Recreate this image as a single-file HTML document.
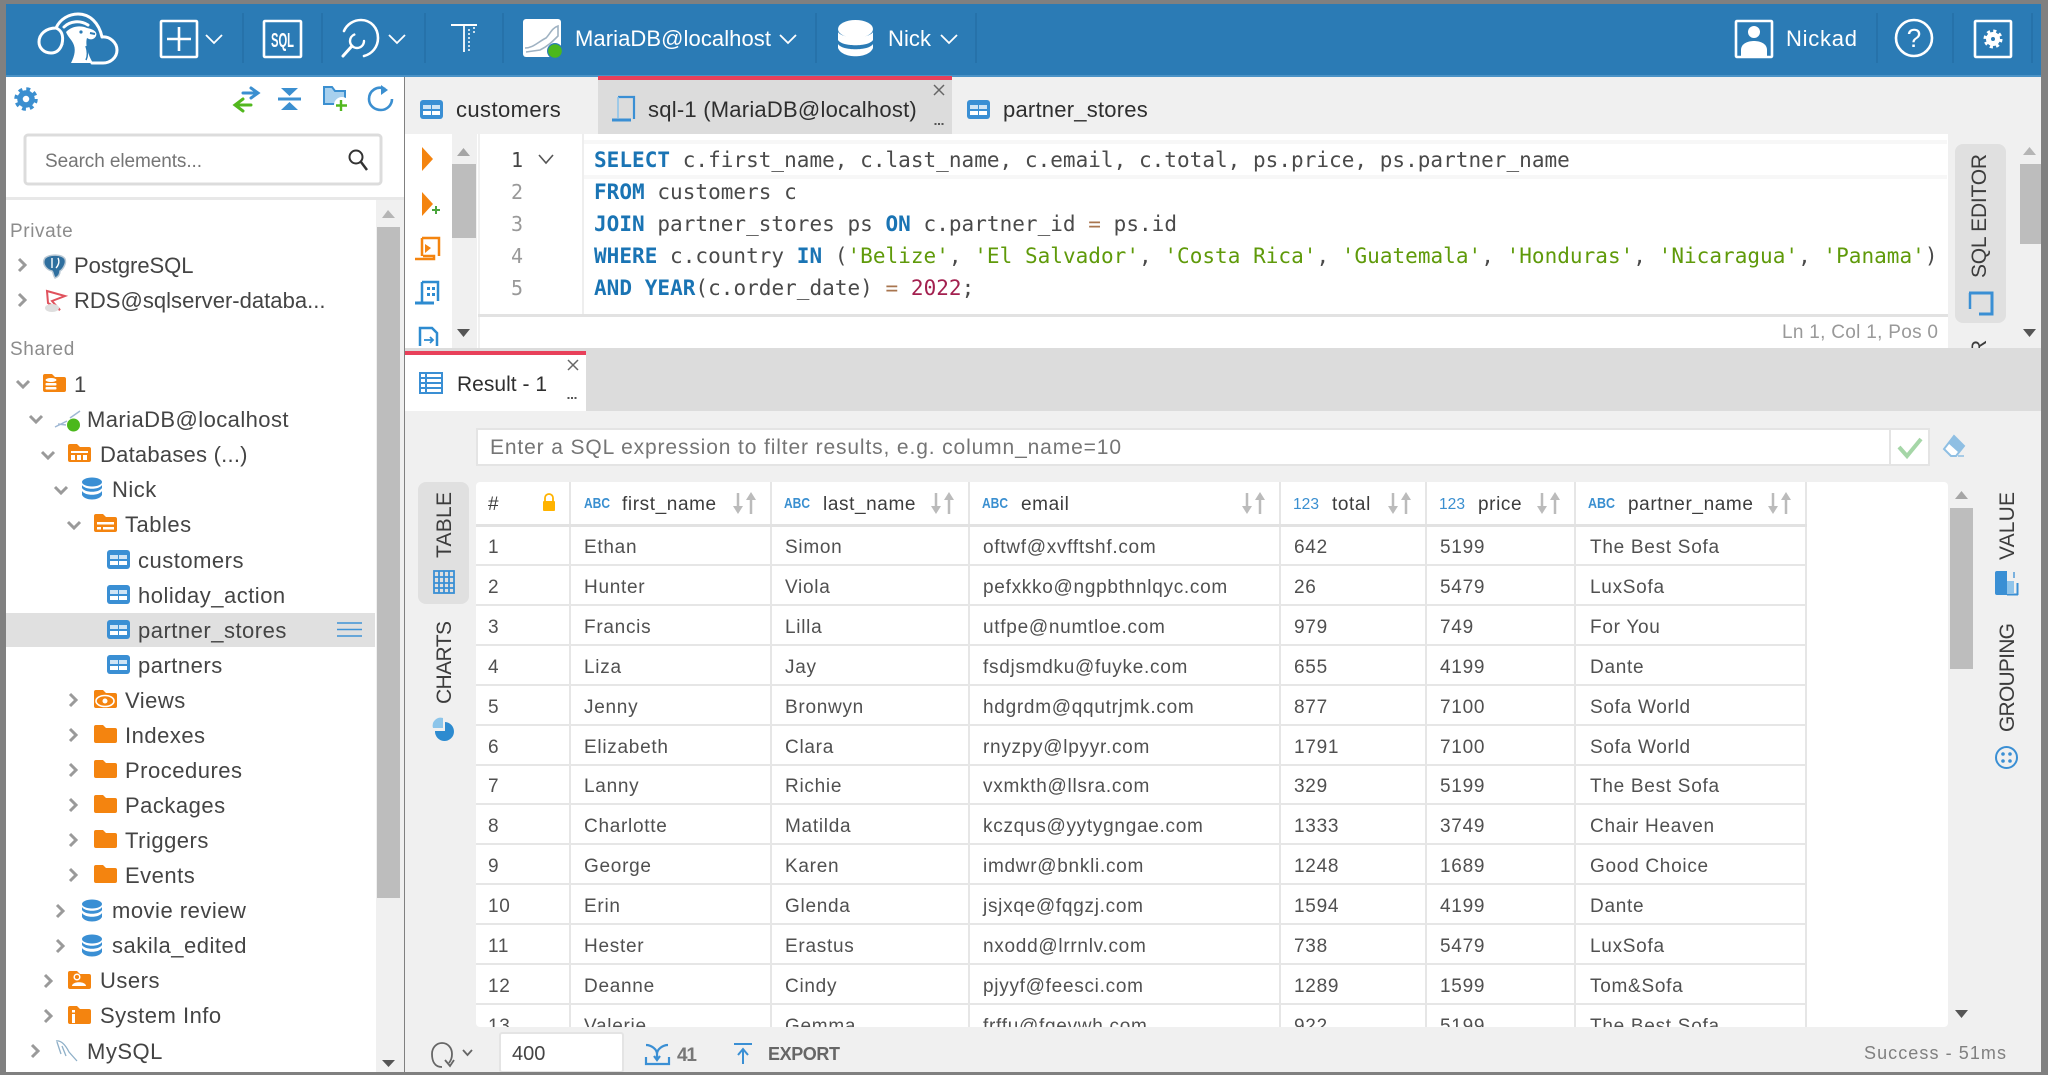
<!DOCTYPE html>
<html lang="en"><head><meta charset="utf-8"><title>MariaDB@localhost</title>
<style>
html,body{margin:0;padding:0;background:#808080;width:2048px;height:1075px;overflow:hidden}
svg{display:block;font-family:"Liberation Sans",sans-serif;filter:blur(.35px)}
.side{font-size:22px;fill:#444;letter-spacing:.5px}
.lab{font-size:19px;fill:#8c8c8c;letter-spacing:.6px}
.tab{font-size:22px;fill:#2e2e2e;letter-spacing:.25px}
.code{font-family:"DejaVu Sans Mono",monospace;font-size:21px;fill:#4a4a4a;letter-spacing:.03px}
.kw{fill:#1a74b4;font-weight:bold}.str{fill:#5f9a0a}.num{fill:#a3204f}.op{fill:#a8754f}
.ln{font-family:"DejaVu Sans Mono",monospace;font-size:20px;fill:#999;text-anchor:middle}
.cell{font-size:19px;fill:#505050;letter-spacing:.72px}
.th{font-size:19px;fill:#3c3c3c;letter-spacing:.6px}
.abc{font-size:15px;font-weight:bold;fill:#3a8fd0}
.n123{font-size:16px;fill:#3a8fd0}
.vt{font-size:21px;fill:#3c3c3c}
.hd{font-size:22px;fill:#fff}
</style></head><body>
<svg width="2048" height="1075" viewBox="0 0 2048 1075" xmlns="http://www.w3.org/2000/svg">
<rect width="2048" height="1075" fill="#808080"/>
<!-- header -->
<rect x="6" y="4" width="2035" height="73" fill="#2b7bb5"/>
<rect x="6" y="75" width="2035" height="2" fill="#4a92c6"/>
<g stroke="#2570a6" stroke-width="1.5"><path d="M243 13V63M322 13V63M425 13V63M503 13V63M816 13V63M976 13V63M1877 13V63M1953 13V63M2032 13V63"/></g>
<!-- logo -->
<g fill="none" stroke="#fff" stroke-width="3" stroke-linecap="round" stroke-linejoin="round">
<path d="M62 44C60 50 56 53 51 53C44 53 39 48 39 42C39 34 46 28 56 28C60 19 69 14 78 14C90 14 99 23 102 37C110 36 117 43 117 50C117 58 110 63 103 63H92"/>
<path d="M56 28C61 30 64 35 62 44"/>
<path d="M64 27C70 21 80 20 88 25"/>
</g>
<path d="M66 32C72 26 80 25 87 28C93 29 98 32 96 36C94 40 90 40 87 38C85 44 88 55 93 63H71C75 55 76 49 73 43C71 39 68 37 66 32Z" fill="#fff"/>
<circle cx="81" cy="32" r="1.6" fill="#2b7bb5"/><path d="M90 33l5 1" stroke="#2b7bb5" stroke-width="2"/><path d="M86 46C88 52 88 56 86 60" fill="none" stroke="#2b7bb5" stroke-width="1.500"/>
<!-- new -->
<g fill="none" stroke="#fff" stroke-width="2.6">
<rect x="161" y="21" width="36" height="36" rx="1"/><path d="M167 39H191M179 27V51"/>
<path d="M206 35l8 8 8-8M389 35l8 8 8-8M780 35l8 8 8-8M941 35l8 8 8-8" stroke-width="1.8"/>
<rect x="264" y="21" width="37" height="36" rx="1"/>
</g>
<text x="271" y="47" font-size="20" font-weight="bold" fill="#fff" textLength="23" lengthAdjust="spacingAndGlyphs">SQL</text>
<!-- history -->
<g fill="none" stroke="#fff" stroke-width="2.6" stroke-linecap="round">
<path d="M344 31C347 24 354 20 361 20C371 20 378 28 378 38C378 47 372 54 364 56"/>
<circle cx="357" cy="41" r="7" stroke-width="2.4" stroke-dasharray="30 20"/><path d="M352 46L343 56" stroke-width="3"/>
</g>
<!-- T -->
<g stroke="#fff" fill="none"><path d="M451 25H477" stroke-width="2"/><path d="M464 26V52" stroke-width="1.8"/><path d="M469 29V52M474 27V34" stroke-width="1.5" stroke-dasharray="2 2"/></g>
<!-- maria -->
<rect x="523" y="19" width="38" height="38" rx="3" fill="#fff"/>
<path d="M525 48C533 48 538 42 546 38C550 34 552 28 558 26V36C552 42 548 46 540 50L526 52" fill="none" stroke="#9fb2c2" stroke-width="1.6"/>
<circle cx="555" cy="51" r="8" fill="#2b7bb5"/><circle cx="555" cy="51" r="6.8" fill="#4bb81c"/>
<text x="575" y="46" class="hd" textLength="196">MariaDB@localhost</text>
<!-- db -->
<g fill="#fff"><ellipse cx="855.500" cy="29" rx="17.500" ry="9"/><path d="M838 32C842 39 869 39 873 32V40C869 47 842 47 838 40Z"/><path d="M838 44C842 51 869 51 873 44V48C869 59 842 59 838 48Z"/></g>
<text x="888" y="46" class="hd" textLength="43">Nick</text>
<!-- right -->
<g fill="none" stroke="#fff" stroke-width="2.6"><rect x="1736" y="21" width="36" height="36" rx="1"/><rect x="1975" y="21" width="36" height="36" rx="1"/><ellipse cx="1914" cy="38" rx="18" ry="18"/></g>
<g fill="#fff"><circle cx="1754" cy="32" r="6"/><path d="M1741 56V50C1741 43 1749 41 1754 41C1759 41 1767 43 1767 50V56Z"/></g>
<text x="1786" y="46" class="hd" textLength="71">Nickad</text>
<text x="1914" y="47" font-size="26" fill="#fff" text-anchor="middle">?</text>
<g fill="none" stroke="#fff"><circle cx="1993" cy="39" r="4.500" stroke-width="5"/><circle cx="1993" cy="39" r="8" stroke-width="3" stroke-dasharray="3.1 3.18"/></g>
<!-- sidebar -->
<rect x="6" y="77" width="398" height="995" fill="#fff"/>
<g fill="none" stroke="#3b8fd0"><circle cx="26" cy="99" r="6" stroke-width="5.500"/><circle cx="26" cy="99" r="10" stroke-width="3.500" stroke-dasharray="3.9 3.95"/></g>
<g stroke-linecap="round">
<path d="M243 93H257M251 88L258 93L251 98" fill="none" stroke="#3b8fd0" stroke-width="3"/>
<path d="M251 105H238M243 99L235 105L243 111" fill="none" stroke="#52b81e" stroke-width="3"/>
</g>
<path d="M278 99H301" stroke="#3b8fd0" stroke-width="3"/><path d="M281 88H298L289.500 96ZM281 110H298L289.500 102Z" fill="#3b8fd0"/>
<path d="M324 87H332L335 91H345V104H324Z" fill="#a7d0ee" stroke="#3b8fd0" stroke-width="2"/><circle cx="342" cy="105" r="8" fill="#fff"/><path d="M341 100V111M336 105.500H347" stroke="#52b81e" stroke-width="2.400"/>
<path d="M385 89C377 85 369 91 369 99C369 106 375 110 381 110C387 110 392 105 392 99" fill="none" stroke="#3b8fd0" stroke-width="2.600"/><path d="M381 85L388 90L381 95Z" fill="#3b8fd0"/>
<rect x="25" y="135" width="356" height="49" rx="3" fill="#fff" stroke="#dcdcdc" stroke-width="3"/>
<text x="45" y="167" font-size="19" fill="#757575" textLength="157">Search elements...</text>
<circle cx="356" cy="157" r="6.500" fill="none" stroke="#333" stroke-width="2"/><path d="M361 162L367 170" stroke="#333" stroke-width="2.500"/>
<rect x="6" y="197" width="398" height="3" fill="#e8e8e8"/>
<rect x="376" y="200" width="28" height="872" fill="#f0f0f0"/>
<rect x="377" y="227" width="23" height="671" fill="#bdbdbd"/>
<path d="M382 218L388 210L395 218Z" fill="#b5b5b5"/><path d="M382 1060H395L388.500 1067Z" fill="#555"/>
<rect x="6" y="613" width="369" height="34" fill="#e0e0e0"/>
<path d="M337 623H362M337 629.500H362M337 636H362" stroke="#3f93d6" stroke-width="1.500"/>
<text x="10" y="237" class="lab">Private</text><text x="10" y="355" class="lab">Shared</text>
<text x="74" y="273" class="side" textLength="120">PostgreSQL</text>
<text x="74" y="308" class="side" textLength="252">RDS@sqlserver-databa...</text>
<text x="74" y="392" class="side">1</text>
<text x="87" y="427" class="side" textLength="202">MariaDB@localhost</text>
<text x="100" y="462" class="side" textLength="148">Databases (...)</text>
<text x="112" y="497" class="side">Nick</text>
<text x="125" y="532" class="side">Tables</text>
<text x="138" y="568" class="side">customers</text>
<text x="138" y="603" class="side">holiday_action</text>
<text x="138" y="638" class="side">partner_stores</text>
<text x="138" y="673" class="side">partners</text>
<text x="125" y="708" class="side">Views</text>
<text x="125" y="743" class="side">Indexes</text>
<text x="125" y="778" class="side">Procedures</text>
<text x="125" y="813" class="side">Packages</text>
<text x="125" y="848" class="side">Triggers</text>
<text x="125" y="883" class="side">Events</text>
<text x="112" y="918" class="side">movie review</text>
<text x="112" y="953" class="side">sakila_edited</text>
<text x="100" y="988" class="side">Users</text>
<text x="100" y="1023" class="side">System Info</text>
<text x="87" y="1059" class="side">MySQL</text>
<!-- tree chevrons -->
<g fill="none" stroke="#9a9a9a" stroke-width="3">
<path d="M19 259l6 6-6 6M19 294l6 6-6 6"/>
<path d="M17 381l6 6 6-6M30 416l6 6 6-6M42 452l6 6 6-6M55 487l6 6 6-6M68 522l6 6 6-6"/>
<path d="M70 694l6 6-6 6M70 729l6 6-6 6M70 764l6 6-6 6M70 799l6 6-6 6M70 834l6 6-6 6M70 869l6 6-6 6"/>
<path d="M57 905l6 6-6 6M57 940l6 6-6 6M45 975l6 6-6 6M45 1010l6 6-6 6M32 1045l6 6-6 6"/>
</g>
<!-- pg + rds + mysql + maria -->
<path d="M45 258C50 254 62 254 65 259C67 264 62 270 60 271C60 275 58 277 55 278C53 275 53 271 52 271C47 270 41 264 45 258Z" fill="#2f6f9f" stroke="#b9c8d4" stroke-width="1.500"/><path d="M52 258V268M58 258C60 262 58 266 56 268" stroke="#fff" stroke-width="1.400" fill="none"/>
<path d="M47 291L65 296L52 301L60 310L48 303Z" fill="none" stroke="#e0525d" stroke-width="2"/><ellipse cx="52" cy="308" rx="7" ry="4" fill="#dedede"/>
<path d="M55 427L67 421M58 424L66 425" stroke="#9fb8d4" stroke-width="1.500" fill="none"/><path d="M70 418L80 411" stroke="#9fb8d4" stroke-width="1.500"/><circle cx="73.500" cy="425" r="6.500" fill="#4bb81c"/>
<path d="M56 1041C62 1040 66 1046 69 1052L77 1061M57 1042L61 1054M62 1046L66 1056" fill="none" stroke="#8fb0c8" stroke-width="1.300"/>
<!-- orange folders -->
<g fill="#f4840f">
<path d="M43 376a2 2 0 0 1 2-2h7l3 3h9a2 2 0 0 1 2 2v11a2 2 0 0 1-2 2H45a2 2 0 0 1-2-2Z"/>
<path d="M68 446a2 2 0 0 1 2-2h7l3 3h9a2 2 0 0 1 2 2v11a2 2 0 0 1-2 2H70a2 2 0 0 1-2-2Z"/>
<path d="M94 516a2 2 0 0 1 2-2h7l3 3h9a2 2 0 0 1 2 2v11a2 2 0 0 1-2 2H96a2 2 0 0 1-2-2Z"/>
<path d="M94 692a2 2 0 0 1 2-2h7l3 3h9a2 2 0 0 1 2 2v11a2 2 0 0 1-2 2H96a2 2 0 0 1-2-2Z"/>
<path d="M94 727a2 2 0 0 1 2-2h7l3 3h9a2 2 0 0 1 2 2v11a2 2 0 0 1-2 2H96a2 2 0 0 1-2-2Z"/>
<path d="M94 762a2 2 0 0 1 2-2h7l3 3h9a2 2 0 0 1 2 2v11a2 2 0 0 1-2 2H96a2 2 0 0 1-2-2Z"/>
<path d="M94 797a2 2 0 0 1 2-2h7l3 3h9a2 2 0 0 1 2 2v11a2 2 0 0 1-2 2H96a2 2 0 0 1-2-2Z"/>
<path d="M94 832a2 2 0 0 1 2-2h7l3 3h9a2 2 0 0 1 2 2v11a2 2 0 0 1-2 2H96a2 2 0 0 1-2-2Z"/>
<path d="M94 867a2 2 0 0 1 2-2h7l3 3h9a2 2 0 0 1 2 2v11a2 2 0 0 1-2 2H96a2 2 0 0 1-2-2Z"/>
<path d="M68 973a2 2 0 0 1 2-2h7l3 3h9a2 2 0 0 1 2 2v11a2 2 0 0 1-2 2H70a2 2 0 0 1-2-2Z"/>
<path d="M68 1008a2 2 0 0 1 2-2h7l3 3h9a2 2 0 0 1 2 2v11a2 2 0 0 1-2 2H70a2 2 0 0 1-2-2Z"/>
</g>
<g fill="#fff">
<ellipse cx="51" cy="380" rx="5.500" ry="2"/><rect x="45.500" y="383" width="11" height="2.500" rx="1"/><rect x="45.500" y="387" width="11" height="2.500" rx="1"/>
<rect x="71" y="451" width="17" height="2"/><rect x="71" y="455" width="4" height="5"/><rect x="77" y="455" width="4" height="5"/><rect x="83" y="455" width="4" height="5"/>
<rect x="97" y="522" width="17" height="2.500"/><rect x="97" y="527" width="4" height="2.500"/><rect x="103" y="527" width="11" height="2.500"/>
<circle cx="77" cy="977" r="2.800" fill="none" stroke="#fff" stroke-width="1.500"/><path d="M72 986C72 981 86 981 86 986Z"/>
<rect x="72" y="1014" width="3" height="9"/><rect x="72" y="1010" width="3" height="2.500"/>
</g>
<ellipse cx="105" cy="701" rx="9" ry="5.500" fill="none" stroke="#fff" stroke-width="1.600"/><circle cx="105" cy="701" r="2.500" fill="#fff"/>
<!-- tree db icons -->
<g fill="#3a8fd4">
<ellipse cx="92" cy="482" rx="10" ry="4.500"/><path d="M82 485C85 490 99 490 102 485V488C99 493 85 493 82 488ZM82 491C85 496 99 496 102 491V495C99 501 85 501 82 495Z"/>
<ellipse cx="92" cy="904" rx="10" ry="4.500"/><path d="M82 907C85 912 99 912 102 907V910C99 915 85 915 82 910ZM82 913C85 918 99 918 102 913V917C99 923 85 923 82 917Z"/>
<ellipse cx="92" cy="939" rx="10" ry="4.500"/><path d="M82 942C85 947 99 947 102 942V945C99 950 85 950 82 945ZM82 948C85 953 99 953 102 948V952C99 958 85 958 82 952Z"/>
</g>
<!-- tree table icons -->
<g fill="#3a8fd4">
<rect x="107" y="550" width="23" height="19" rx="3"/><rect x="107" y="585" width="23" height="19" rx="3"/><rect x="107" y="620" width="23" height="19" rx="3"/><rect x="107" y="655" width="23" height="19" rx="3"/>
</g>
<g fill="#cfe4f5">
<path d="M110 555h8v4h-8zM119 555h8v4h-8zM110 590h8v4h-8zM119 590h8v4h-8zM110 625h8v4h-8zM119 625h8v4h-8zM110 660h8v4h-8zM119 660h8v4h-8z"/>
</g>
<g fill="#fff">
<path d="M110 561h8v4h-8zM119 561h8v4h-8zM110 596h8v4h-8zM119 596h8v4h-8zM110 631h8v4h-8zM119 631h8v4h-8zM110 666h8v4h-8zM119 666h8v4h-8z"/>
</g>
<!-- main -->
<rect x="405" y="77" width="1636" height="995" fill="#f0f0f0"/>
<rect x="598" y="77" width="354" height="57" fill="#dcdcdc"/>
<rect x="598" y="76" width="354" height="4" fill="#e8405a"/>
<g fill="#3a8fd4"><rect x="420" y="100" width="23" height="19" rx="3"/><rect x="967" y="100" width="23" height="19" rx="3"/></g>
<path d="M423 105h8v4h-8zM432 105h8v4h-8zM970 105h8v4h-8zM979 105h8v4h-8z" fill="#cfe4f5"/>
<path d="M423 111h8v4h-8zM432 111h8v4h-8zM970 111h8v4h-8zM979 111h8v4h-8z" fill="#fff"/>
<text x="456" y="117" class="tab" textLength="105">customers</text>
<path d="M618 97H634V119" fill="none" stroke="#3a8fd4" stroke-width="2.200"/><path d="M618 97V118" fill="none" stroke="#8fc4ea" stroke-width="1.600"/><path d="M612 120H631" fill="none" stroke="#3a8fd4" stroke-width="3"/>
<text x="648" y="117" class="tab" textLength="269">sql-1 (MariaDB@localhost)</text>
<path d="M934 85L944 95M944 85L934 95" stroke="#666" stroke-width="1.500"/>
<path d="M934.500 124H936.500M938 124H940M941.500 124H943.500" stroke="#555" stroke-width="2"/>
<text x="1003" y="117" class="tab" textLength="145">partner_stores</text>
<!-- editor -->
<rect x="405" y="134" width="1550" height="214" fill="#fff"/>
<rect x="452" y="134" width="25" height="214" fill="#f0f0f0"/>
<rect x="452" y="164" width="24" height="74" fill="#bdbdbd"/>
<path d="M457 156H470L463.500 148Z" fill="#a5a5a5"/><path d="M457 329H470L463.500 337Z" fill="#555"/>
<!-- run icons -->
<path d="M422 147L433 159L422 171Z" fill="#f4840f"/>
<path d="M422 192L433 204L422 216Z" fill="#f4840f"/><path d="M436 206V214M432 210H440" stroke="#4aa53c" stroke-width="2"/>
<path d="M422 238V256M422 238H439V256" fill="none" stroke="#f4840f" stroke-width="2.500"/><path d="M415 259H434V256H423" fill="none" stroke="#f4840f" stroke-width="2.500"/><path d="M425 244L431 248L425 253Z" fill="#f4840f"/>
<path d="M422 282V302M422 282H438V301" fill="none" stroke="#2d8bd0" stroke-width="2.500"/><path d="M415 303H434" stroke="#2d8bd0" stroke-width="3"/><path d="M427 287h3v3h-3zM432 287h3v3h-3zM427 293h3v3h-3zM432 293h3v3h-3z" fill="#2d8bd0"/>
<path d="M420 346V328H432L437 333V346" fill="none" stroke="#2d8bd0" stroke-width="2.500"/><path d="M424 340H433M430 337L433 340L430 343" fill="none" stroke="#2d8bd0" stroke-width="1.800"/>
<!-- code -->
<rect x="478" y="134" width="2" height="214" fill="#f0f0f0"/>
<rect x="582" y="134" width="2" height="181" fill="#eeeeee"/>
<rect x="584" y="140" width="1363" height="4" fill="#f7f7f7"/><rect x="584" y="175" width="1363" height="4" fill="#f7f7f7"/>
<rect x="478" y="314" width="1470" height="3" fill="#e2e2e2"/>
<text x="517" y="167" class="ln" style="fill:#444">1</text><text x="517" y="199" class="ln">2</text><text x="517" y="231" class="ln">3</text><text x="517" y="263" class="ln">4</text><text x="517" y="295" class="ln">5</text>
<path d="M539 155l7 8 7-8" fill="none" stroke="#555" stroke-width="1.600"/>
<text x="594" y="167" class="code"><tspan class="kw">SELECT</tspan> c.first_name, c.last_name, c.email, c.total, ps.price, ps.partner_name</text>
<text x="594" y="199" class="code"><tspan class="kw">FROM</tspan> customers c</text>
<text x="594" y="231" class="code"><tspan class="kw">JOIN</tspan> partner_stores ps <tspan class="kw">ON</tspan> c.partner_id <tspan class="op">=</tspan> ps.id</text>
<text x="594" y="263" class="code"><tspan class="kw">WHERE</tspan> c.country <tspan class="kw">IN</tspan> (<tspan class="str">'Belize'</tspan>, <tspan class="str">'El Salvador'</tspan>, <tspan class="str">'Costa Rica'</tspan>, <tspan class="str">'Guatemala'</tspan>, <tspan class="str">'Honduras'</tspan>, <tspan class="str">'Nicaragua'</tspan>, <tspan class="str">'Panama'</tspan>)</text>
<text x="594" y="295" class="code"><tspan class="kw">AND</tspan> <tspan class="kw">YEAR</tspan>(c.order_date) <tspan class="op">=</tspan> <tspan class="num">2022</tspan>;</text>
<text x="1938" y="338" font-size="19" fill="#999" text-anchor="end" textLength="156">Ln 1, Col 1, Pos 0</text>
<!-- editor right -->
<rect x="1948" y="134" width="93" height="214" fill="#f0f0f0"/>
<rect x="1955" y="144" width="51" height="179" rx="8" fill="#e0e0e0"/>
<text transform="translate(1986,278) rotate(-90)" class="vt" textLength="124">SQL EDITOR</text>
<path d="M1969 293H1992V314H1979" fill="none" stroke="#3a8fd4" stroke-width="3"/><path d="M1970 293V309" stroke="#3a8fd4" stroke-width="2.500"/>
<text transform="translate(1986,355) rotate(-90)" class="vt">R</text>
<rect x="2020" y="164" width="21" height="80" fill="#bdbdbd"/>
<path d="M2023 155H2036L2029.500 147Z" fill="#b5b5b5"/><path d="M2023 329H2036L2029.500 337Z" fill="#555"/>
<!-- result band -->
<rect x="405" y="348" width="1636" height="63" fill="#dcdcdc"/>
<rect x="405" y="351" width="181" height="60" fill="#fff"/>
<rect x="405" y="351" width="181" height="4" fill="#e8405a"/>
<g fill="none" stroke="#3a8fd4" stroke-width="2"><rect x="420" y="373" width="22" height="20"/><path d="M420 378H442M420 383H442M420 388H442M426 373V393"/></g>
<text x="457" y="391" font-size="21" fill="#2e2e2e" textLength="90">Result - 1</text>
<path d="M568 360L578 370M578 360L568 370" stroke="#666" stroke-width="1.500"/>
<path d="M567.500 398H569.500M571 398H573M574.500 398H576.500" stroke="#555" stroke-width="2"/>
<!-- filter -->
<rect x="477" y="429" width="1452" height="36" fill="#fff" stroke="#e4e4e4" stroke-width="2"/>
<path d="M1890 429V465" stroke="#e4e4e4" stroke-width="2"/>
<text x="490" y="454" font-size="21" fill="#757575" textLength="631">Enter a SQL expression to filter results, e.g. column_name=10</text>
<path d="M1899 447L1907 456L1921 439" fill="none" stroke="#a5d6a7" stroke-width="4"/>
<path d="M1954 436L1964 446L1956 456H1951L1944 449Z" fill="#fff" stroke="#8fbfe3" stroke-width="2"/><path d="M1954 436L1964 446L1958 452L1948 443Z" fill="#8fbfe3"/><path d="M1958 456H1964" stroke="#8fbfe3" stroke-width="1.500"/>
<!-- table -->
<rect x="476" y="482" width="1472" height="545" rx="4" fill="#fff"/>
<g stroke="#e6e6e6" stroke-width="2" fill="none">
<path d="M570 482V1027M771 482V1027M969 482V1027M1280 482V1027M1426 482V1027M1575 482V1027M1806 482V1027"/>
<path d="M476 525H1807M476 565H1807M476 605H1807M476 645H1807M476 685H1807M476 725H1807M476 765H1807M476 804H1807M476 844H1807M476 884H1807M476 924H1807M476 964H1807M476 1004H1807"/>
</g>
<rect x="476" y="524" width="1331" height="3" fill="#e2e2e2"/>
<rect x="1950" y="482" width="23" height="545" fill="#f0f0f0"/>
<rect x="1950" y="508" width="23" height="161" fill="#bdbdbd"/>
<path d="M1955 499H1968L1961.500 491Z" fill="#a5a5a5"/><path d="M1955 1010H1968L1961.500 1018Z" fill="#555"/>
<text x="488" y="510" class="th">#</text>
<path d="M545 502V498a4 4 0 0 1 8 0V502" fill="none" stroke="#ffb300" stroke-width="1.800"/><rect x="543" y="501" width="12" height="10" rx="1" fill="#ffb300"/>
<text x="584" y="508" class="abc" textLength="26" lengthAdjust="spacingAndGlyphs">ABC</text><text x="622" y="510" class="th">first_name</text>
<text x="784" y="508" class="abc" textLength="26" lengthAdjust="spacingAndGlyphs">ABC</text><text x="823" y="510" class="th">last_name</text>
<text x="982" y="508" class="abc" textLength="26" lengthAdjust="spacingAndGlyphs">ABC</text><text x="1021" y="510" class="th">email</text>
<text x="1293" y="509" class="n123" textLength="26" lengthAdjust="spacingAndGlyphs">123</text><text x="1332" y="510" class="th">total</text>
<text x="1439" y="509" class="n123" textLength="26" lengthAdjust="spacingAndGlyphs">123</text><text x="1478" y="510" class="th">price</text>
<text x="1588" y="508" class="abc" textLength="27" lengthAdjust="spacingAndGlyphs">ABC</text><text x="1628" y="510" class="th">partner_name</text>
<g fill="#bbb" stroke="#bbb">
<path d="M738 493V512" stroke-width="2.500" fill="none"/><path d="M751 495V514" stroke-width="2.500" fill="none"/><path d="M733 506H743L738 514ZM746 500H756L751 492Z" stroke="none"/>
<path d="M936 493V512" stroke-width="2.500" fill="none"/><path d="M949 495V514" stroke-width="2.500" fill="none"/><path d="M931 506H941L936 514ZM944 500H954L949 492Z" stroke="none"/>
<path d="M1247 493V512" stroke-width="2.500" fill="none"/><path d="M1260 495V514" stroke-width="2.500" fill="none"/><path d="M1242 506H1252L1247 514ZM1255 500H1265L1260 492Z" stroke="none"/>
<path d="M1393 493V512" stroke-width="2.500" fill="none"/><path d="M1406 495V514" stroke-width="2.500" fill="none"/><path d="M1388 506H1398L1393 514ZM1401 500H1411L1406 492Z" stroke="none"/>
<path d="M1542 493V512" stroke-width="2.500" fill="none"/><path d="M1555 495V514" stroke-width="2.500" fill="none"/><path d="M1537 506H1547L1542 514ZM1550 500H1560L1555 492Z" stroke="none"/>
<path d="M1773 493V512" stroke-width="2.500" fill="none"/><path d="M1786 495V514" stroke-width="2.500" fill="none"/><path d="M1768 506H1778L1773 514ZM1781 500H1791L1786 492Z" stroke="none"/>
</g>
<g class="rows">
<text class="cell" x="488" y="553">1</text><text class="cell" x="584" y="553">Ethan</text><text class="cell" x="785" y="553">Simon</text><text class="cell" x="983" y="553">oftwf@xvfftshf.com</text><text class="cell" x="1294" y="553">642</text><text class="cell" x="1440" y="553">5199</text><text class="cell" x="1590" y="553">The Best Sofa</text>
<text class="cell" x="488" y="593">2</text><text class="cell" x="584" y="593">Hunter</text><text class="cell" x="785" y="593">Viola</text><text class="cell" x="983" y="593">pefxkko@ngpbthnlqyc.com</text><text class="cell" x="1294" y="593">26</text><text class="cell" x="1440" y="593">5479</text><text class="cell" x="1590" y="593">LuxSofa</text>
<text class="cell" x="488" y="633">3</text><text class="cell" x="584" y="633">Francis</text><text class="cell" x="785" y="633">Lilla</text><text class="cell" x="983" y="633">utfpe@numtloe.com</text><text class="cell" x="1294" y="633">979</text><text class="cell" x="1440" y="633">749</text><text class="cell" x="1590" y="633">For You</text>
<text class="cell" x="488" y="673">4</text><text class="cell" x="584" y="673">Liza</text><text class="cell" x="785" y="673">Jay</text><text class="cell" x="983" y="673">fsdjsmdku@fuyke.com</text><text class="cell" x="1294" y="673">655</text><text class="cell" x="1440" y="673">4199</text><text class="cell" x="1590" y="673">Dante</text>
<text class="cell" x="488" y="713">5</text><text class="cell" x="584" y="713">Jenny</text><text class="cell" x="785" y="713">Bronwyn</text><text class="cell" x="983" y="713">hdgrdm@qqutrjmk.com</text><text class="cell" x="1294" y="713">877</text><text class="cell" x="1440" y="713">7100</text><text class="cell" x="1590" y="713">Sofa World</text>
<text class="cell" x="488" y="753">6</text><text class="cell" x="584" y="753">Elizabeth</text><text class="cell" x="785" y="753">Clara</text><text class="cell" x="983" y="753">rnyzpy@lpyyr.com</text><text class="cell" x="1294" y="753">1791</text><text class="cell" x="1440" y="753">7100</text><text class="cell" x="1590" y="753">Sofa World</text>
<text class="cell" x="488" y="792">7</text><text class="cell" x="584" y="792">Lanny</text><text class="cell" x="785" y="792">Richie</text><text class="cell" x="983" y="792">vxmkth@llsra.com</text><text class="cell" x="1294" y="792">329</text><text class="cell" x="1440" y="792">5199</text><text class="cell" x="1590" y="792">The Best Sofa</text>
<text class="cell" x="488" y="832">8</text><text class="cell" x="584" y="832">Charlotte</text><text class="cell" x="785" y="832">Matilda</text><text class="cell" x="983" y="832">kczqus@yytygngae.com</text><text class="cell" x="1294" y="832">1333</text><text class="cell" x="1440" y="832">3749</text><text class="cell" x="1590" y="832">Chair Heaven</text>
<text class="cell" x="488" y="872">9</text><text class="cell" x="584" y="872">George</text><text class="cell" x="785" y="872">Karen</text><text class="cell" x="983" y="872">imdwr@bnkli.com</text><text class="cell" x="1294" y="872">1248</text><text class="cell" x="1440" y="872">1689</text><text class="cell" x="1590" y="872">Good Choice</text>
<text class="cell" x="488" y="912">10</text><text class="cell" x="584" y="912">Erin</text><text class="cell" x="785" y="912">Glenda</text><text class="cell" x="983" y="912">jsjxqe@fqgzj.com</text><text class="cell" x="1294" y="912">1594</text><text class="cell" x="1440" y="912">4199</text><text class="cell" x="1590" y="912">Dante</text>
<text class="cell" x="488" y="952">11</text><text class="cell" x="584" y="952">Hester</text><text class="cell" x="785" y="952">Erastus</text><text class="cell" x="983" y="952">nxodd@lrrnlv.com</text><text class="cell" x="1294" y="952">738</text><text class="cell" x="1440" y="952">5479</text><text class="cell" x="1590" y="952">LuxSofa</text>
<text class="cell" x="488" y="992">12</text><text class="cell" x="584" y="992">Deanne</text><text class="cell" x="785" y="992">Cindy</text><text class="cell" x="983" y="992">pjyyf@feesci.com</text><text class="cell" x="1294" y="992">1289</text><text class="cell" x="1440" y="992">1599</text><text class="cell" x="1590" y="992">Tom&amp;Sofa</text>
<text class="cell" x="488" y="1032">13</text><text class="cell" x="584" y="1032">Valerie</text><text class="cell" x="785" y="1032">Gemma</text><text class="cell" x="983" y="1032">frffu@fqevwh.com</text><text class="cell" x="1294" y="1032">922</text><text class="cell" x="1440" y="1032">5199</text><text class="cell" x="1590" y="1032">The Best Sofa</text>
</g>
<!-- left vertical tabs -->
<rect x="418" y="482" width="51" height="122" rx="8" fill="#e0e0e0"/>
<text transform="translate(451,558) rotate(-90)" class="vt" textLength="66">TABLE</text>
<g fill="none" stroke="#3a8fd4" stroke-width="1.800"><rect x="434" y="571" width="20" height="22"/><path d="M434 577H454M434 583H454M434 588H454M439 571V593M444 571V593M449 571V593"/></g>
<text transform="translate(451,704) rotate(-90)" class="vt" textLength="83">CHARTS</text>
<path d="M445 722A9.500 9.500 0 1 1 435 731H445Z" fill="#2d8bd0"/><path d="M443 718A8 8 0 0 0 433 728H443Z" fill="#8cc5ea"/>
<!-- right vertical tabs -->
<text transform="translate(2014,560) rotate(-90)" class="vt" textLength="68">VALUE</text>
<path d="M1995 573a2 2 0 0 1 2-2H2007V595H1997a2 2 0 0 1-2-2Z" fill="#3a8fd4"/><path d="M2007 581H2014V593H2007Z" fill="#8fc4ea"/><path d="M2007 594.500H2018M2017.500 583V595" fill="none" stroke="#3a8fd4" stroke-width="2"/><path d="M2014 572V578" stroke="#3a8fd4" stroke-width="1.300"/>
<text transform="translate(2014,732) rotate(-90)" class="vt" textLength="109">GROUPING</text>
<circle cx="2006.500" cy="757.500" r="10.500" fill="none" stroke="#3a8fd4" stroke-width="2"/><g fill="#3a8fd4"><circle cx="2003" cy="754" r="1.800"/><circle cx="2010" cy="754" r="1.800"/><circle cx="2003" cy="761" r="1.800"/><circle cx="2010" cy="761" r="1.800"/></g>
<!-- bottom bar -->
<rect x="405" y="1027" width="1636" height="45" fill="#f0f0f0"/>
<path d="M442 1067C434 1067 432 1060 432 1054C432 1047 437 1043 442 1043C448 1043 452 1048 452 1054C452 1058 451 1060 449 1063" fill="none" stroke="#666" stroke-width="1.800"/><path d="M445 1060L450 1066L454 1060" fill="none" stroke="#666" stroke-width="1.800"/>
<path d="M463 1050l4.500 5 4.500-5" fill="none" stroke="#666" stroke-width="1.800"/>
<rect x="500" y="1033" width="123" height="39" rx="2" fill="#fff" stroke="#e4e4e4" stroke-width="2"/>
<rect x="498" y="1072" width="127" height="1" fill="#808080"/>
<text x="512" y="1060" font-size="20" fill="#444">400</text>
<path d="M646 1045C651 1045 657 1049 657 1054C657 1049 663 1045 668 1045M657 1054V1060M654 1056L657 1060L660 1056M646 1057V1064H669V1057" fill="none" stroke="#3a8fd4" stroke-width="2.200"/>
<text x="677" y="1061" font-size="19" font-weight="bold" fill="#777" textLength="20">41</text>
<path d="M734 1044H752" stroke="#3a8fd4" stroke-width="2"/><path d="M743 1064V1050M738 1055L743 1049L748 1055" fill="none" stroke="#3a8fd4" stroke-width="2"/>
<text x="768" y="1060" font-size="18" font-weight="bold" fill="#666" textLength="72">EXPORT</text>
<text x="2006" y="1059" font-size="18" fill="#808080" text-anchor="end" textLength="142">Success - 51ms</text>
<!-- frame -->
<rect x="2041" y="0" width="7" height="1075" fill="#808080"/>
<rect x="0" y="1072" width="2048" height="3" fill="#808080"/>
</svg>
</body></html>
